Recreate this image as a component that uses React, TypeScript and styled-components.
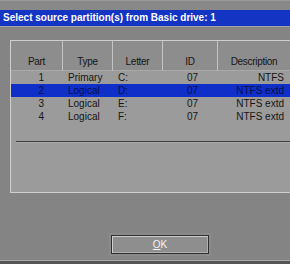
import React from "react";
import styled, { createGlobalStyle } from "styled-components";

const Global = createGlobalStyle`
  html, body { margin: 0; padding: 0; background: #848484; }
  body { width: 290px; height: 264px; overflow: hidden; font-family: "Liberation Sans", Arial, sans-serif; }
`;

const Window = styled.div`
  width: 290px;
  height: 264px;
  display: flex;
  flex-direction: column;
  background: #848484;
  box-sizing: border-box;
  border-top: 1px solid #9a9a9a;
  border-bottom: 3px solid #555555;
`;

const TopStrip = styled.div`
  height: 9px;
  background: #888888;
`;

const TitleBar = styled.div`
  height: 16px;
  background: #1434c4;
  color: #ffffff;
  font-weight: bold;
  font-size: 10px;
  line-height: 16px;
  padding-left: 3px;
  white-space: nowrap;
  border-bottom: 1px solid #a4a4a4;
`;

const Body = styled.div`
  flex: 1;
  display: flex;
  flex-direction: column;
  padding: 13px 0 0 10px;
  border-bottom: 1px solid #a8a8a8;
`;

const Panel = styled.div`
  height: 151px;
  background: #9b9b9b;
  border-left: 1px solid #cfcfcf;
  border-top: 1px solid #cfcfcf;
  border-bottom: 1px solid #cfcfcf;
  display: flex;
  flex-direction: column;
`;

const Grid = styled.div`
  display: grid;
  grid-template-columns: 51px 50px 50px 55px 1fr;
  font-size: 10px;
  color: #151515;
`;

const HeadCell = styled.div<{ $first?: boolean }>`
  height: 30px;
  background: #8d8d8d;
  border-left: ${(p) => (p.$first ? "none" : "1px solid #c4c4c4")};
  box-sizing: border-box;
  display: flex;
  align-items: flex-end;
  justify-content: center;
  padding-bottom: 3px;
  letter-spacing: -0.3px;
  border-bottom: 1px solid #a9a9a9;
`;

const Cell = styled.div<{ $align: "left" | "right" | "center"; $pad: number; $sel?: boolean }>`
  height: 13px;
  line-height: 14px;
  text-align: ${(p) => p.$align};
  padding-left: ${(p) => (p.$align === "left" ? p.$pad : 0)}px;
  padding-right: ${(p) => (p.$align === "right" ? p.$pad : 0)}px;
  background: ${(p) => (p.$sel ? "#0f2fc8" : "transparent")};
  color: ${(p) => (p.$sel ? "#06104e" : "#151515")};
  white-space: nowrap;
`;

const Separator = styled.div`
  margin: 18px 0 0 5px;
  height: 1px;
  background: #3c3c3c;
  border-bottom: 1px solid #acacac;
`;

const ButtonRow = styled.div`
  display: flex;
  padding: 42px 0 0 101px;
`;

const OkButton = styled.div`
  width: 98px;
  height: 19px;
  box-sizing: border-box;
  border: 1px solid #2e2e2e;
  box-shadow: inset 1px 1px 0 #cfcfcf, inset -1px -1px 0 #b0b0b0, 0 0 0 2px #8b8b8b;
  background: #8e8e8e;
  color: #f4f4f4;
  font-size: 10px;
  display: flex;
  align-items: center;
  justify-content: center;
`;

const U = styled.span`
  text-decoration: underline;
`;

type Row = { part: string; type: string; letter: string; id: string; desc: string; sel?: boolean };

const rows: Row[] = [
  { part: "1", type: "Primary", letter: "C:", id: "07", desc: "NTFS" },
  { part: "2", type: "Logical", letter: "D:", id: "07", desc: "NTFS extd", sel: true },
  { part: "3", type: "Logical", letter: "E:", id: "07", desc: "NTFS extd" },
  { part: "4", type: "Logical", letter: "F:", id: "07", desc: "NTFS extd" },
];

export default function App() {
  return (
    <>
      <Global />
      <Window>
        <TopStrip />
        <TitleBar>Select source partition(s) from Basic drive: 1</TitleBar>
        <Body>
          <Panel>
            <Grid>
              <HeadCell $first>Part</HeadCell>
              <HeadCell>Type</HeadCell>
              <HeadCell>Letter</HeadCell>
              <HeadCell>ID</HeadCell>
              <HeadCell>Description</HeadCell>
              {rows.map((r) => (
                <React.Fragment key={r.part}>
                  <Cell $align="right" $pad={18} $sel={r.sel}>{r.part}</Cell>
                  <Cell $align="left" $pad={6} $sel={r.sel}>{r.type}</Cell>
                  <Cell $align="left" $pad={6} $sel={r.sel}>{r.letter}</Cell>
                  <Cell $align="right" $pad={19} $sel={r.sel}>{r.id}</Cell>
                  <Cell $align="right" $pad={6} $sel={r.sel}>{r.desc}</Cell>
                </React.Fragment>
              ))}
            </Grid>
            <Separator />
          </Panel>
          <ButtonRow>
            <OkButton>
              <U>O</U>K
            </OkButton>
          </ButtonRow>
        </Body>
      </Window>
    </>
  );
}
